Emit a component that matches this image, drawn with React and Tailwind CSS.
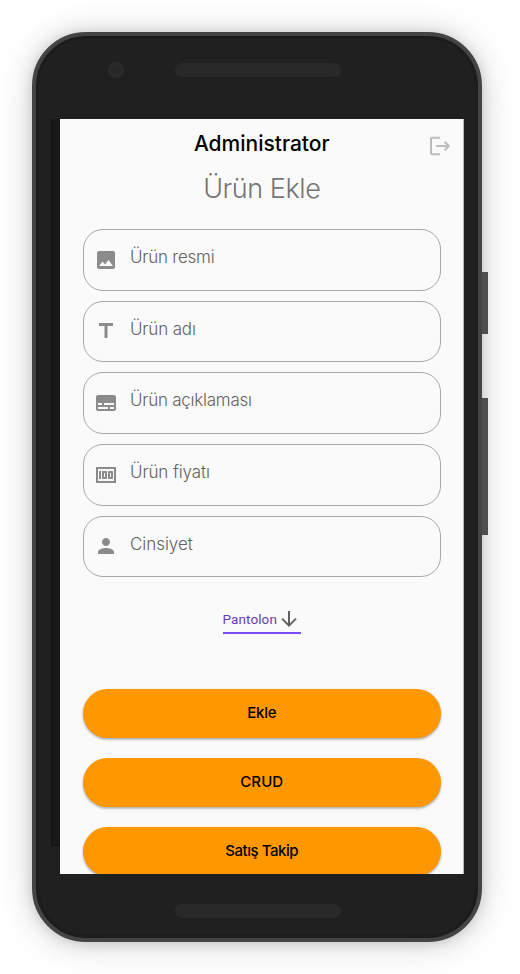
import { MdImage, MdTitle, MdSubtitles, MdMoney, MdPerson } from "react-icons/md";

const fields = [
  { label: "Ürün resmi", Icon: MdImage, track: "tracking-[-0.22px]" },
  { label: "Ürün adı", Icon: MdTitle, track: "tracking-[-0.15px]" },
  { label: "Ürün açıklaması", Icon: MdSubtitles, track: "tracking-[-0.24px]" },
  { label: "Ürün fiyatı", Icon: MdMoney, track: "tracking-[-0.1px]" },
  { label: "Cinsiyet", Icon: MdPerson, track: "tracking-[-0.05px]" },
];

const actions = [
  { label: "Ekle", track: "tracking-[-0.2px]" },
  { label: "CRUD", track: "tracking-[0.1px]" },
  { label: "Satış Takip", track: "tracking-[-0.45px]" },
];

function Field({ label, Icon, track }) {
  return (
    <div className="flex h-[61.7px] shrink-0 rounded-[20px] border border-[#a8a8a8] pl-[10.5px]">
      <Icon className="mt-[17.5px] size-6 shrink-0 text-[#8b8b8b]" />
      <span className={`ml-[12px] mt-[15px] text-[17px] font-light leading-6 text-[#626262] ${track}`}>
        {label}
      </span>
    </div>
  );
}

export default function App() {
  return (
    <div className="flex h-[974px] w-[520px] overflow-hidden bg-white pl-8 pt-8 font-['Inter',sans-serif]">
      <div className="flex h-[910px] w-[450px] shrink-0 flex-col rounded-[54px] border-4 border-[#444] bg-[#202020] shadow-[inset_0_0_0_3px_#1c1c1c,0_2px_34px_rgba(0,0,0,0.2),0_1px_12px_rgba(0,0,0,0.13)]">
        <div className="flex h-[83px] shrink-0 pl-[72px] pt-[26px]">
          <div className="flex size-4 items-center justify-center rounded-full bg-[#2a2a2a]">
            <div className="size-2.5 rounded-full bg-[#272727]" />
          </div>
          <div className="ml-[51px] mt-px h-3.5 w-[166px] rounded-full bg-[#292929]" />
        </div>
        <div className="flex h-[755px] shrink-0 pl-[15px]">
          <div className="h-[727px] w-[9px] border-b border-l border-[#111] bg-[#18191b]" />
          <main className="flex w-[404px] flex-col overflow-hidden border-r border-[#bbb] bg-[#fafafa] pl-[22.5px] pr-[22px]">
            <header className="relative flex h-[110px] shrink-0 flex-col items-center">
              <h1 className="mt-[13px] text-[21px] font-medium leading-6 text-black">Administrator</h1>
              <h2 className="mt-[17px] text-[27px] font-light leading-8 tracking-[-0.45px] text-[#757575]">Ürün Ekle</h2>
              <svg viewBox="0 0 24 24" className="absolute right-[-10px] top-[15px] size-6" fill="none" stroke="#bdbdbd" strokeWidth="2" strokeLinejoin="round">
                <path d="M13 3.8H5Q4 3.8 4 4.8V19.2Q4 20.2 5 20.2H13M9 12H21.8M17.6 7.8L21.8 12L17.6 16.2" />
              </svg>
            </header>
            <div className="flex flex-col gap-[10px]">
              {fields.map((f) => <Field key={f.label} {...f} />)}
            </div>
            <div className="mt-[30px] flex h-[27px] w-[78.5px] shrink-0 self-center border-b-2 border-[#7c4dff] font-['Roboto',sans-serif]">
              <span className="mt-[2px] text-[13.5px] leading-5 tracking-[0.1px] text-[#673ab7]">Pantolon</span>
              <svg viewBox="0 0 16 16" className="ml-1 mt-[3.5px] size-4 shrink-0" fill="none" stroke="#616161" strokeWidth="2">
                <path d="M8 0V15M1 7.6L8 14.6L15 7.6" />
              </svg>
            </div>
            <div className="mt-[55px] flex flex-col gap-[19.7px]">
              {actions.map((a) => (
                <button key={a.label} className={`h-[49px] shrink-0 rounded-full bg-[#ff9800] pb-px text-[15px] font-medium text-black shadow-[0_1.5px_2.5px_rgba(0,0,0,0.33)] ${a.track}`}>
                  {a.label}
                </button>
              ))}
            </div>
          </main>
        </div>
        <div className="ml-[139px] mt-[30px] h-3.5 w-[166px] rounded-full bg-[#292929]" />
      </div>
      <div className="flex shrink-0 flex-col pt-[240px]">
        <div className="h-[62px] w-1.5 bg-[#4e4e4e]" />
        <div className="mt-16 h-[137px] w-1.5 bg-[#4e4e4e]" />
      </div>
    </div>
  );
}
